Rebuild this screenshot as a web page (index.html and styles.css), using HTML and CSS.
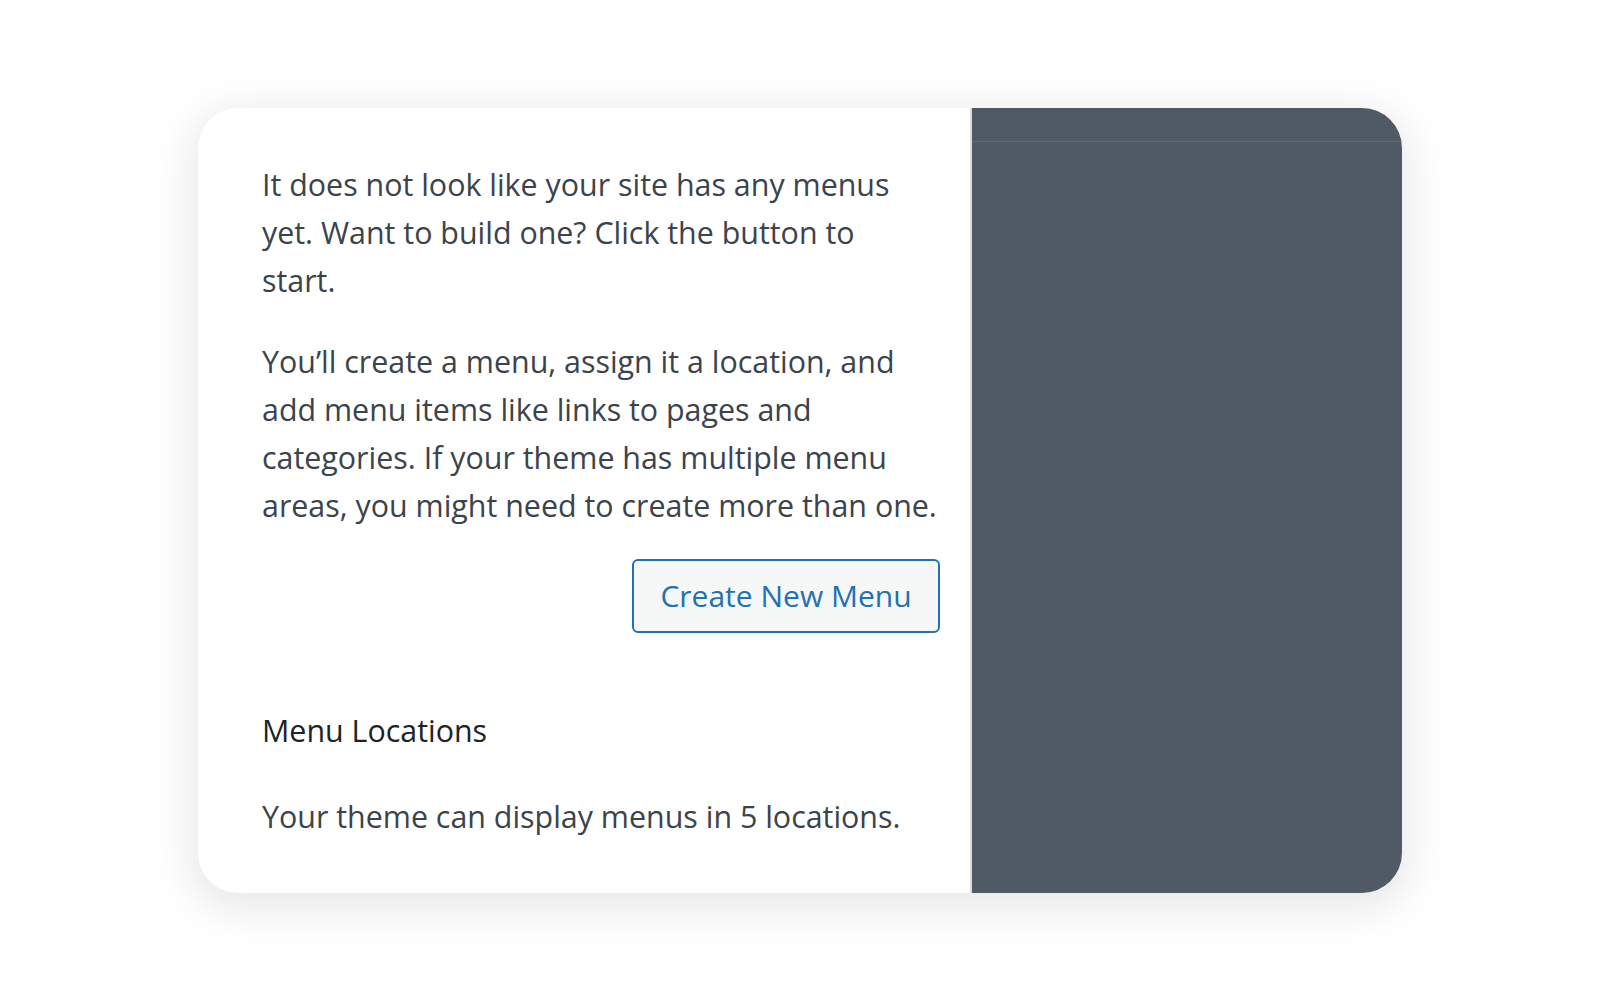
FILE: index.html
```html
<!DOCTYPE html>
<html lang="en">
<head>
    <meta charset="UTF-8">
    <meta name="viewport" content="width=device-width, initial-scale=1.0">
    <title>Menus</title>
    <link rel="stylesheet" href="styles.css">
</head>
<body>

<div class="card">
    <div class="content">
        <div class="intro">
            <p class="lead">It does not look like your site has any menus yet. Want to build one? Click the button to start.</p>
            <p>You’ll create a menu, assign it a location, and add menu items like links to pages and categories. If your theme has multiple menu areas, you might need to create more than one.</p>
        </div>
        <div class="actions">
            <button type="button" class="btn">Create New Menu</button>
        </div>
        <h3 class="section-title">Menu Locations</h3>
        <p class="section-text">Your theme can display menus in 5 locations.</p>
    </div>
    <div class="sidebar">
        <div class="sidebar-head"></div>
    </div>
</div>

</body>
</html>
```

FILE: styles.css
```css
* {
    box-sizing: border-box;
}
body {
    font-family: "Segoe UI", "Open Sans", "Liberation Sans", sans-serif;
    background-color: #ffffff;
    color: #3c434a;
    display: flex;
    align-items: center;
    justify-content: center;
    height: 100vh;
    margin: 0;
}
.card {
    display: flex;
    width: 1204px;
    height: 785px;
    background-color: #ffffff;
    border-radius: 40px;
    overflow: hidden;
    box-shadow: 0 10px 40px 8px rgba(0, 0, 0, 0.09);
}
.content {
    flex: 0 0 772px;
    padding: 53px 30px 52px 64px;
    font-size: 30.4px;
    line-height: 48px;
}
.intro p {
    margin: 0;
}
.intro p + p {
    margin-top: 33px;
}
.intro .lead {
    max-width: 650px;
}
.actions {
    display: flex;
    justify-content: flex-end;
    margin-top: 29px;
}
.btn {
    height: 74px;
    width: 308px;
    padding: 0 20px;
    background-color: #f6f7f7;
    color: #2271b1;
    font-family: inherit;
    font-size: 30px;
    border: 2px solid #2271b1;
    border-radius: 6px;
    cursor: pointer;
}
.section-title {
    margin: 74px 0 0;
    font-size: 30.4px;
    font-weight: 400;
    color: #1d2327;
}
.section-text {
    margin: 38px 0 0;
}
.sidebar {
    flex: 1;
    background-color: #4f5a65;
    border-left: 2px solid #dcdcde;
}
.sidebar-head {
    height: 34px;
    border-bottom: 1px solid #5f6a75;
}
```
